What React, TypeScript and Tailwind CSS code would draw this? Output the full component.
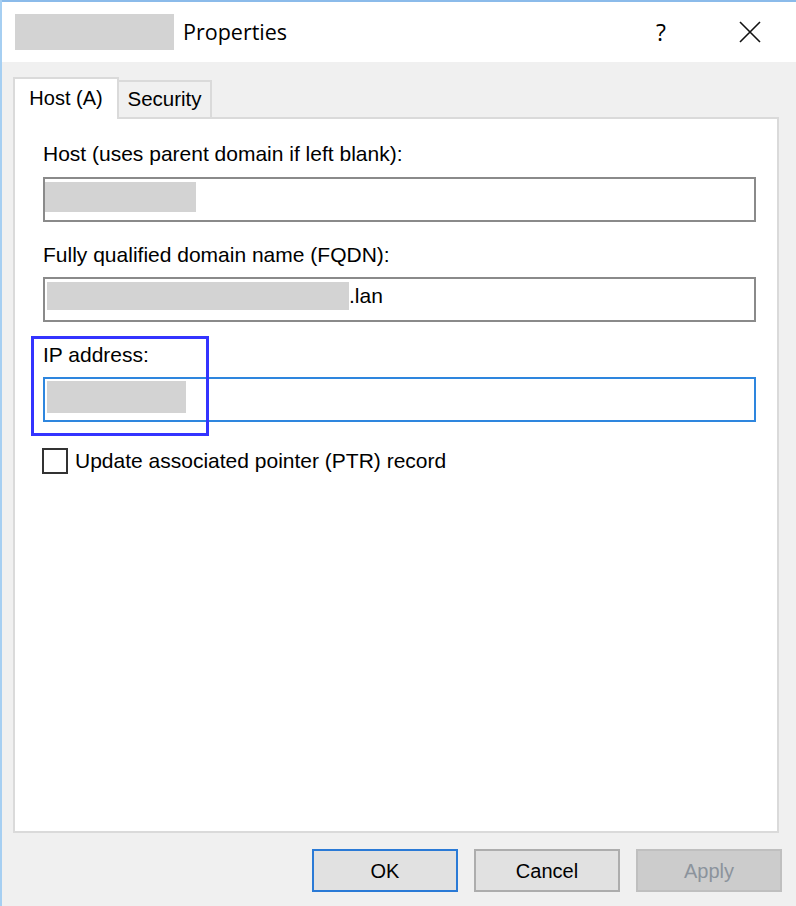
import React from "react";

const SANS = { fontFamily: '"Liberation Sans", Arial, sans-serif' };
const TITLE = { fontFamily: '"Open Sans", "Noto Sans", sans-serif' };

function Label({ children, className = "" }: { children: React.ReactNode; className?: string }) {
  return <div className={"h-[24px] leading-[24px] text-[21px] text-black whitespace-nowrap " + className}>{children}</div>;
}

export default function App() {
  return (
    <div className="relative w-[796px] h-[906px] bg-[#f0f0f0] border-l-2 border-[#a6cff2] overflow-hidden" style={SANS}>
      {/* title bar */}
      <div className="h-[62px] bg-white flex items-center border-t-2 border-[#8bbbea]">
        <div className="ml-[13px] w-[159px] h-[36px] bg-[#d3d3d3]" />
        <div className="ml-[9px] text-[21.5px] leading-[28px] text-black" style={TITLE}>Properties</div>
        <div className="ml-auto w-[40px] flex justify-center text-[23px] leading-[28px] text-black" style={TITLE}>?</div>
        <div className="ml-[49px] mr-[26px] w-[40px] flex justify-center">
          <svg width="24" height="24" viewBox="0 0 24 24">
            <path d="M2 2 L22 22 M22 2 L2 22" stroke="#111" strokeWidth="1.6" fill="none" />
          </svg>
        </div>
      </div>

      {/* body */}
      <div className="pl-[11px] pt-[15px]">
        <div className="relative z-10 flex items-end h-[40px]">
          <div className="w-[106px] h-[42px] -mb-[2px] bg-white border-2 border-b-0 border-[#dadada] flex items-center justify-center pb-[3px] text-[20px] text-black">
            Host (A)
          </div>
          <div className="w-[93px] h-[37px] bg-[#f0f0f0] border-2 border-b-0 border-l-0 border-[#dadada] flex items-center justify-center text-[20.5px] text-black">
            Security
          </div>
        </div>

        <div className="w-[766px] h-[716px] bg-white border-2 border-[#dadada] pt-[23px] pl-[28px] flex flex-col">
          <Label>Host (uses parent domain if left blank):</Label>
          <div className="mt-[11px] w-[713px] h-[45px] border-2 border-[#8a8a8a] bg-white pt-[3px]">
            <div className="w-[151px] h-[30px] bg-[#d3d3d3]" />
          </div>

          <Label className="mt-[21px]">Fully qualified domain name (FQDN):</Label>
          <div className="mt-[10px] w-[713px] h-[45px] border-2 border-[#8a8a8a] bg-white pt-[3px] pl-[2px] flex items-start">
            <div className="w-[302px] h-[28px] bg-[#d3d3d3]" />
            <span className="text-[21px] leading-[28px] text-black">.lan</span>
          </div>

          <Label className="mt-[21px]">IP address:</Label>
          <div className="mt-[10px] w-[713px] h-[45px] border-2 border-[#2e86de] bg-white pt-[2px] pl-[2px]">
            <div className="w-[139px] h-[32px] bg-[#d3d3d3]" />
          </div>

          <div className="mt-[26px] flex items-center h-[26px] -ml-[1px]">
            <div className="w-[26px] h-[26px] border-2 border-[#333333] bg-white" />
            <span className="ml-[7px] text-[21px] leading-[24px] text-black">Update associated pointer (PTR) record</span>
          </div>
        </div>

        <div className="mt-[16px] flex justify-end pr-[14px] gap-[16px]">
          <div className="w-[146px] h-[43px] bg-[#e1e1e1] border-2 border-[#2a7ad6] flex items-center justify-center text-[20px] text-black">OK</div>
          <div className="w-[146px] h-[43px] bg-[#e1e1e1] border-2 border-[#adadad] flex items-center justify-center text-[20px] text-black">Cancel</div>
          <div className="w-[146px] h-[43px] bg-[#cccccc] border-2 border-[#bfbfbf] flex items-center justify-center text-[20px] text-[#8b939c]">Apply</div>
        </div>
      </div>

      {/* annotation highlight */}
      <div className="absolute left-[29px] top-[336px] w-[178px] h-[100px] border-[3px] border-[#3434ff]" />
    </div>
  );
}
